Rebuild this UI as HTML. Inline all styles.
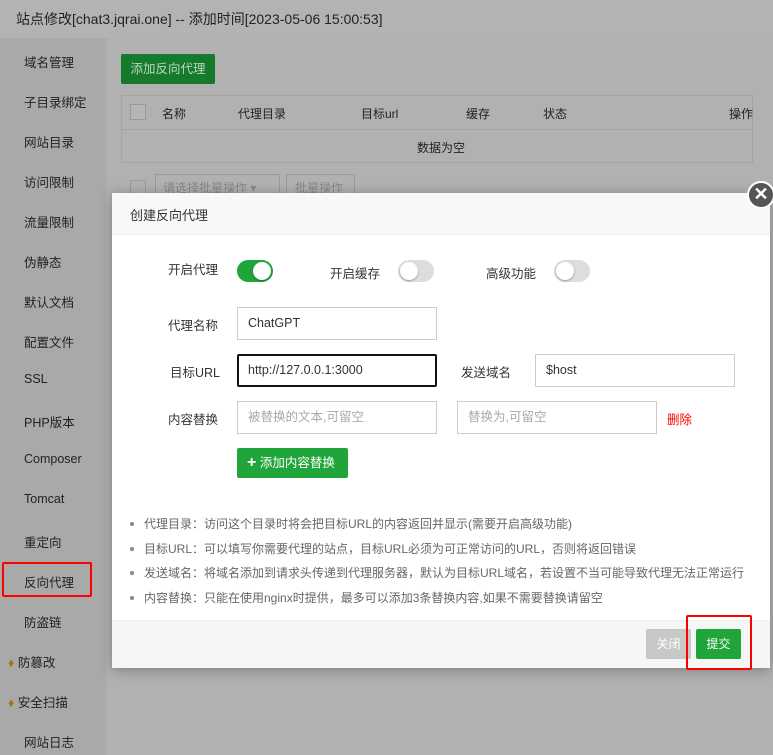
<!DOCTYPE html>
<html><head><meta charset="utf-8"><style>
*{box-sizing:border-box;margin:0;padding:0}
body{width:773px;height:755px;overflow:hidden;background:#b1b1b1;font-family:"Liberation Sans","Noto Sans CJK SC",sans-serif;font-size:12px;color:#333;position:relative}
.abs{position:absolute}
.hdr{left:0;top:0;width:773px;height:38px;background:#b3b3b3;font-size:14px;color:#222;padding:9px 0 0 16px}
.side{left:0;top:38px;width:106px;height:717px;background:#a9a9a9}
.side div{position:absolute;left:24px;font-size:12.5px;color:#222}
.t{color:#222}
.inp{position:absolute;height:33px;border:1px solid #ccc;background:#fff;padding:0 10px;line-height:31px;font-size:12.5px;color:#333}
.ph{color:#aaa}
.lbl{position:absolute;font-size:12.5px;color:#333}
.sw{position:absolute;width:36px;height:22px;border-radius:11px;background:#ddd}
.sw i{position:absolute;top:2px;left:2px;width:18px;height:18px;border-radius:50%;background:#fff;box-shadow:0 1px 2px rgba(0,0,0,.3)}
.sw.on{background:#20a53a}.sw.on i{left:16px}
ul{position:absolute;left:130px;top:516px;list-style:none}
ul li{font-size:12px;color:#666;height:24.5px;line-height:16px;position:relative;padding-left:14px;white-space:nowrap}
ul li:before{content:"";position:absolute;left:0;top:6px;width:4px;height:4px;border-radius:50%;background:#888}
</style></head><body>
<div class="abs hdr">站点修改[chat3.jqrai.one] -- 添加时间[2023-05-06 15:00:53]</div>
<div class="abs side">
<div style="top:14px">域名管理</div><div style="top:54px">子目录绑定</div><div style="top:94px">网站目录</div><div style="top:134px">访问限制</div><div style="top:174px">流量限制</div><div style="top:214px">伪静态</div><div style="top:254px">默认文档</div><div style="top:294px">配置文件</div><div style="top:334px">SSL</div><div style="top:374px">PHP版本</div><div style="top:414px">Composer</div><div style="top:454px">Tomcat</div><div style="top:494px">重定向</div>
<div style="top:534px">反向代理</div><div style="top:574px">防盗链</div>
<div style="top:614px;left:8px"><span style="color:#a07a10">♦</span> 防篡改</div>
<div style="top:654px;left:8px"><span style="color:#a07a10">♦</span> 安全扫描</div>
<div style="top:694px">网站日志</div>
</div>
<div class="abs" style="left:2px;top:562px;width:90px;height:35px;border:2px solid #f00;border-radius:2px"></div>
<div class="abs" style="left:121px;top:54px;width:94px;height:30px;background:#167a2c;border-radius:2px;font-size:12.5px;line-height:30px;text-align:center;color:#b8d8be">添加反向代理</div>
<div class="abs" style="left:121px;top:95px;width:632px;height:68px;border:1px solid #a3a3a3"></div>
<div class="abs" style="left:121px;top:129px;width:632px;height:1px;background:#a3a3a3"></div>
<div class="abs" style="left:130px;top:104px;width:16px;height:16px;border:1px solid #999;background:#b6b6b6"></div>
<div class="abs t" style="left:162px;top:105px">名称</div><div class="abs t" style="left:238px;top:105px">代理目录</div><div class="abs t" style="left:361px;top:105px">目标url</div><div class="abs t" style="left:466px;top:105px">缓存</div><div class="abs t" style="left:543px;top:105px">状态</div><div class="abs t" style="left:729px;top:105px">操作</div>
<div class="abs t" style="left:417px;top:139px">数据为空</div>
<div class="abs" style="left:130px;top:180px;width:16px;height:16px;border:1px solid #999"></div>
<div class="abs" style="left:155px;top:174px;width:125px;height:24px;border:1px solid #999;color:#888;padding:4px 7px">请选择批量操作 ▾</div>
<div class="abs" style="left:286px;top:174px;width:69px;height:24px;border:1px solid #999;color:#888;padding:4px 8px">批量操作</div>

<div class="abs" style="left:112px;top:193px;width:658px;height:475px;background:#fff;box-shadow:0 2px 12px rgba(0,0,0,.3)"></div>
<div class="abs" style="left:112px;top:193px;width:658px;height:42px;background:#f8f8f8;border-bottom:1px solid #eee;font-size:13px;padding:12px 0 0 18px;color:#333">创建反向代理</div>
<div class="abs" style="left:747px;top:181px;width:28px;height:28px;border-radius:50%;background:#555;border:2px solid #fff;color:#fff;font-size:18px;line-height:22px;text-align:center;font-weight:bold">✕</div>

<div class="lbl" style="left:168px;top:259px">开启代理</div><div class="sw on" style="left:237px;top:260px"><i></i></div>
<div class="lbl" style="left:330px;top:263px">开启缓存</div><div class="sw" style="left:398px;top:260px"><i></i></div>
<div class="lbl" style="left:486px;top:263px">高级功能</div><div class="sw" style="left:554px;top:260px"><i></i></div>
<div class="lbl" style="left:168px;top:315px">代理名称</div><div class="inp" style="left:237px;top:307px;width:200px">ChatGPT</div>
<div class="lbl" style="left:170px;top:362px">目标URL</div><div class="inp" style="left:237px;top:354px;width:200px;border:2px solid #111;border-radius:2px;line-height:29px;padding-left:9px">http://127.0.0.1:3000</div>
<div class="lbl" style="left:461px;top:362px">发送域名</div><div class="inp" style="left:535px;top:354px;width:200px">$host</div>
<div class="lbl" style="left:168px;top:409px">内容替换</div><div class="inp ph" style="left:237px;top:401px;width:200px">被替换的文本,可留空</div>
<div class="inp ph" style="left:457px;top:401px;width:200px">替换为,可留空</div>
<div class="lbl" style="left:667px;top:409px;color:#f00">删除</div>
<div class="abs" style="left:237px;top:448px;width:111px;height:30px;background:#20a53a;color:#fff;border-radius:2px;line-height:30px;font-size:12.5px;padding-left:10px"><b style="font-size:16px">+</b> 添加内容替换</div>
<ul><li>代理目录：访问这个目录时将会把目标URL的内容返回并显示(需要开启高级功能)</li><li>目标URL：可以填写你需要代理的站点，目标URL必须为可正常访问的URL，否则将返回错误</li><li>发送域名：将域名添加到请求头传递到代理服务器，默认为目标URL域名，若设置不当可能导致代理无法正常运行</li><li>内容替换：只能在使用nginx时提供，最多可以添加3条替换内容,如果不需要替换请留空</li></ul>
<div class="abs" style="left:112px;top:620px;width:658px;height:48px;background:#f5f7f6;border-top:1px solid #eee"></div>
<div class="abs" style="left:646px;top:629px;width:45px;height:30px;background:#c8c8c8;color:#fff;line-height:30px;text-align:center;border-radius:2px">关闭</div>
<div class="abs" style="left:696px;top:629px;width:45px;height:30px;background:#20a53a;color:#fff;line-height:30px;text-align:center;border-radius:2px">提交</div>
<div class="abs" style="left:686px;top:615px;width:66px;height:55px;border:2px solid #f00;border-radius:2px"></div>
</body></html>
